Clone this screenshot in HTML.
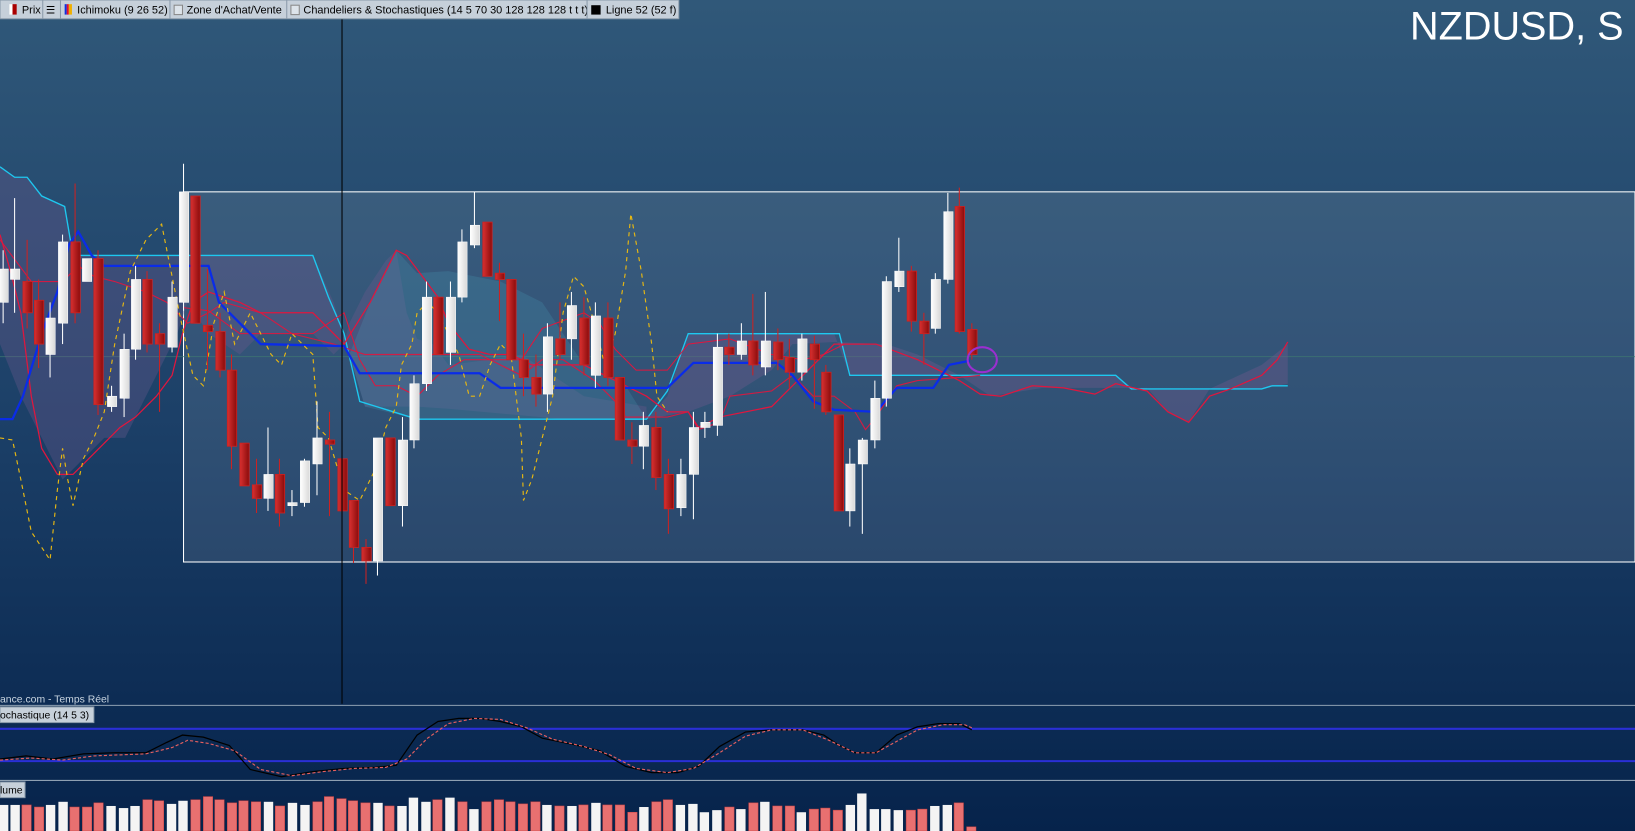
<!DOCTYPE html>
<html><head><meta charset="utf-8"><style>
html,body{margin:0;padding:0;width:1635px;height:831px;overflow:hidden;background:#0a2a50}
svg{display:block}
.w{fill:url(#gw);stroke:#fff;stroke-width:.5}
.r{fill:url(#gr);stroke:#c22;stroke-width:.8}
.wk{stroke:#fff;stroke-width:1}
.rk{stroke:#c22;stroke-width:1}
.vw{fill:#f4f4f4}
.vr{fill:#e87070;stroke:#c44;stroke-width:.5}
text{font-family:"Liberation Sans",sans-serif}
</style></head><body>
<svg width="1635" height="831" viewBox="0 0 1568 797" preserveAspectRatio="none">
<defs>
<linearGradient id="bg" x1="0" y1="0" x2="0" y2="1"><stop offset="0" stop-color="#305879"/><stop offset="0.5" stop-color="#1c4068"/><stop offset="1" stop-color="#06234b"/></linearGradient>
<linearGradient id="gw" x1="0" x2="1"><stop offset="0" stop-color="#fff"/><stop offset="1" stop-color="#d8d8d8"/></linearGradient>
<linearGradient id="gr" x1="0" x2="1"><stop offset="0" stop-color="#d83030"/><stop offset="1" stop-color="#8a0c0c"/></linearGradient>
</defs>
<rect width="1568" height="797" fill="url(#bg)"/>
<rect x="176" y="184" width="1392" height="355" fill="rgba(255,255,255,0.09)" stroke="#fff" stroke-width="1"/>
<line x1="0" y1="342" x2="1568" y2="342" stroke="#3f7a70" stroke-width="1" opacity=".7"/>
<!-- clouds -->
<polygon points="0,160 14,170 26,170 40,188 62,198 70,245 90,245 120,245 300,245 320,290 335,340 350,390 400,390 430,392 540,402 620,402 620,390 560,380 500,340 470,345 430,350 415,330 400,325 390,300 380,240 370,250 350,280 335,310 330,330 320,340 300,320 250,320 230,340 200,320 180,290 170,320 150,360 120,420 100,420 80,440 60,460 40,420 20,380 0,330" fill="rgba(110,90,140,.35)"/>
<polygon points="620,402 640,380 660,320 700,320 800,320 815,360 1070,360 1085,373 1210,373 1235,368 1235,330 1210,350 1160,373 1140,405 1120,395 1100,372 1080,372 1050,372 1000,372 950,380 920,360 880,340 850,330 800,328 760,330 740,355 700,380 660,395" fill="rgba(110,90,140,.4)"/>
<polygon points="335,340 350,390 400,402 540,402 620,402 600,370 560,350 520,290 480,270 430,260 400,262 380,240 355,290" fill="rgba(70,150,180,.25)"/>
<!-- senkou cyan -->
<polyline points="0,160 14,170 26,170 40,188 62,198 70,245 90,245 300,245 315,285 330,320 345,385 400,402 620,402 640,375 660,320 805,320 815,360 1070,360 1085,373 1210,373 1220,370 1235,370" fill="none" stroke="#1ec8f0" stroke-width="1.3"/>
<!-- senkou red -->
<polyline points="0,225 10,260 20,300 30,380 40,430 55,455 70,455 85,440 105,420 115,410 130,400 150,380 165,360 175,320 185,290 200,280 230,290 250,300 300,300 330,330 355,290 380,240 390,245 420,285 430,310 450,335 470,340 490,340 510,350 560,350 580,360 600,370 620,380 640,395 660,395 670,410 690,400 740,390 760,370 780,350 800,330 840,330 880,345 920,365 940,378 960,380 990,370 1020,372 1050,378 1070,368 1100,375 1120,395 1140,405 1160,380 1180,373 1210,360 1225,345 1235,328" fill="none" stroke="#e0163e" stroke-width="1.2"/>
<!-- tenkan -->
<polyline points="0,230 30,270 60,270 75,255 90,265 110,270 140,280 160,290 180,310 200,300 215,290 250,300 280,320 320,330 350,340 400,340 460,340 470,345 500,360 520,345 540,345 570,365 590,385 600,400 640,400 660,395 670,412 690,405 700,380 740,375 760,360 780,380 800,380 820,395 830,412 840,400 860,370 880,365 920,362 940,360" fill="none" stroke="#e0163e" stroke-width="1.1" opacity=".9"/>
<polyline points="176,295 200,298 230,320 300,320 330,300 345,345 360,370 380,370 400,380 420,360 445,345 500,345 520,315 560,300 575,310 590,335 610,355 640,355 660,330 700,325 740,340 770,345 790,340 810,330" fill="none" stroke="#e0163e" stroke-width="1"/>
<!-- kijun blue -->
<polyline points="0,402 12,402 22,380 40,320 55,280 66,235 75,222 88,245 100,255 200,255 210,290 230,310 250,330 330,332 345,358 400,358 460,358 480,372 600,372 620,372 640,372 665,348 745,348 760,360 780,385 800,393 840,395 860,372 895,372 910,350 930,346" fill="none" stroke="#0a2ce8" stroke-width="2.2"/>
<!-- chikou dashed -->
<polyline points="0,420 12,422 20,460 30,510 40,525 48,537 55,470 60,430 65,460 70,485 80,440 90,420 100,395 110,330 125,260 140,230 155,215 160,240 172,300 185,360 195,370 205,310 215,280 225,330 240,300 260,340 270,350 280,320 290,330 300,340 305,410 315,420 330,470 345,480 360,450 370,410 380,390 385,350 395,330 400,300 410,290 420,300 430,320 440,340 450,380 460,380 470,350 480,330 490,340 500,420 502,480 510,460 520,420 530,380 540,300 550,265 560,275 570,310 580,350 590,320 600,260 605,205 615,260 625,330 630,380 640,395" fill="none" stroke="#e8b812" stroke-width="1.1" stroke-dasharray="4,4"/>
<!-- candles -->
<g>
<line class="wk" x1="3" y1="240" x2="3" y2="310"/><rect class="w" x="-1" y="258" width="9" height="32"/>
<line class="wk" x1="14" y1="190" x2="14" y2="300"/><rect class="w" x="10" y="258" width="9" height="10"/>
<line class="rk" x1="26" y1="230" x2="26" y2="315"/><rect class="r" x="22" y="270" width="9" height="30"/>
<line class="rk" x1="37" y1="268" x2="37" y2="353"/><rect class="r" x="33" y="288" width="9" height="42"/>
<line class="wk" x1="48" y1="290" x2="48" y2="362"/><rect class="w" x="44" y="305" width="9" height="35"/>
<line class="wk" x1="60" y1="225" x2="60" y2="330"/><rect class="w" x="56" y="232" width="9" height="78"/>
<line class="rk" x1="72" y1="176" x2="72" y2="310"/><rect class="r" x="68" y="232" width="9" height="68"/>
<rect class="w" x="79" y="248" width="9" height="22"/>
<line class="rk" x1="94" y1="240" x2="94" y2="398"/><rect class="r" x="90" y="248" width="9" height="140"/>
<line class="wk" x1="107" y1="370" x2="107" y2="395"/><rect class="w" x="103" y="380" width="9" height="10"/>
<line class="wk" x1="119" y1="320" x2="119" y2="400"/><rect class="w" x="115" y="335" width="9" height="47"/>
<line class="wk" x1="130" y1="255" x2="130" y2="345"/><rect class="w" x="126" y="268" width="9" height="67"/>
<line class="rk" x1="141" y1="260" x2="141" y2="338"/><rect class="r" x="137" y="268" width="9" height="62"/>
<line class="rk" x1="153" y1="310" x2="153" y2="395"/><rect class="r" x="149" y="320" width="9" height="10"/>
<line class="wk" x1="165" y1="270" x2="165" y2="338"/><rect class="w" x="161" y="285" width="9" height="48"/>
<line class="wk" x1="176" y1="157" x2="176" y2="298"/><rect class="w" x="172" y="184" width="9" height="106"/>
<rect class="r" x="183" y="188" width="9" height="122"/>
<line class="rk" x1="199" y1="258" x2="199" y2="355"/><rect class="r" x="195" y="312" width="9" height="6"/>
<line class="rk" x1="211" y1="300" x2="211" y2="362"/><rect class="r" x="207" y="318" width="9" height="37"/>
<line class="rk" x1="222" y1="340" x2="222" y2="450"/><rect class="r" x="218" y="355" width="9" height="73"/>
<rect class="r" x="230" y="425" width="9" height="41"/>
<line class="rk" x1="246" y1="440" x2="246" y2="492"/><rect class="r" x="242" y="465" width="9" height="13"/>
<line class="wk" x1="257" y1="410" x2="257" y2="490"/><rect class="w" x="253" y="455" width="9" height="23"/>
<line class="rk" x1="268" y1="440" x2="268" y2="505"/><rect class="r" x="264" y="455" width="9" height="37"/>
<line class="wk" x1="280" y1="470" x2="280" y2="495"/><rect class="w" x="276" y="482" width="9" height="3"/>
<line class="wk" x1="292" y1="440" x2="292" y2="486"/><rect class="w" x="288" y="442" width="9" height="40"/>
<line class="wk" x1="304" y1="385" x2="304" y2="475"/><rect class="w" x="300" y="420" width="9" height="25"/>
<line class="rk" x1="316" y1="395" x2="316" y2="495"/><rect class="r" x="312" y="422" width="9" height="4"/>
<rect class="r" x="324" y="440" width="9" height="50"/>
<line class="rk" x1="339" y1="480" x2="339" y2="540"/><rect class="r" x="335" y="480" width="9" height="45"/>
<line class="rk" x1="351" y1="517" x2="351" y2="560"/><rect class="r" x="347" y="525" width="9" height="13"/>
<line class="wk" x1="362" y1="435" x2="362" y2="552"/><rect class="w" x="358" y="420" width="9" height="118"/>
<rect class="r" x="370" y="420" width="9" height="65"/>
<line class="wk" x1="386" y1="400" x2="386" y2="505"/><rect class="w" x="382" y="422" width="9" height="63"/>
<line class="wk" x1="397" y1="360" x2="397" y2="430"/><rect class="w" x="393" y="368" width="9" height="54"/>
<line class="wk" x1="409" y1="270" x2="409" y2="375"/><rect class="w" x="405" y="285" width="9" height="83"/>
<rect class="r" x="416" y="285" width="9" height="55"/>
<line class="wk" x1="432" y1="270" x2="432" y2="350"/><rect class="w" x="428" y="285" width="9" height="53"/>
<line class="wk" x1="443" y1="220" x2="443" y2="290"/><rect class="w" x="439" y="232" width="9" height="53"/>
<line class="wk" x1="455" y1="184" x2="455" y2="238"/><rect class="w" x="451" y="216" width="9" height="19"/>
<rect class="r" x="463" y="213" width="9" height="52"/>
<line class="rk" x1="479" y1="252" x2="479" y2="308"/><rect class="r" x="475" y="262" width="9" height="6"/>
<rect class="r" x="486" y="268" width="9" height="77"/>
<line class="rk" x1="502" y1="320" x2="502" y2="380"/><rect class="r" x="498" y="345" width="9" height="17"/>
<line class="rk" x1="514" y1="340" x2="514" y2="390"/><rect class="r" x="510" y="362" width="9" height="16"/>
<line class="wk" x1="525" y1="310" x2="525" y2="395"/><rect class="w" x="521" y="323" width="9" height="55"/>
<line class="rk" x1="537" y1="290" x2="537" y2="345"/><rect class="r" x="533" y="325" width="9" height="15"/>
<line class="wk" x1="548" y1="280" x2="548" y2="345"/><rect class="w" x="544" y="293" width="9" height="32"/>
<line class="rk" x1="560" y1="285" x2="560" y2="360"/><rect class="r" x="556" y="305" width="9" height="45"/>
<line class="wk" x1="571" y1="290" x2="571" y2="372"/><rect class="w" x="567" y="303" width="9" height="57"/>
<line class="rk" x1="583" y1="290" x2="583" y2="370"/><rect class="r" x="579" y="305" width="9" height="57"/>
<rect class="r" x="590" y="362" width="9" height="60"/>
<line class="rk" x1="606" y1="405" x2="606" y2="445"/><rect class="r" x="602" y="422" width="9" height="6"/>
<line class="wk" x1="617" y1="395" x2="617" y2="450"/><rect class="w" x="613" y="408" width="9" height="20"/>
<line class="rk" x1="629" y1="395" x2="629" y2="470"/><rect class="r" x="625" y="410" width="9" height="48"/>
<line class="rk" x1="641" y1="440" x2="641" y2="512"/><rect class="r" x="637" y="455" width="9" height="33"/>
<line class="wk" x1="653" y1="440" x2="653" y2="495"/><rect class="w" x="649" y="455" width="9" height="32"/>
<line class="wk" x1="665" y1="395" x2="665" y2="498"/><rect class="w" x="661" y="410" width="9" height="45"/>
<line class="wk" x1="676" y1="395" x2="676" y2="420"/><rect class="w" x="672" y="405" width="9" height="5"/>
<line class="wk" x1="688" y1="320" x2="688" y2="418"/><rect class="w" x="684" y="333" width="9" height="75"/>
<line class="rk" x1="699" y1="320" x2="699" y2="350"/><rect class="r" x="695" y="333" width="9" height="7"/>
<line class="wk" x1="711" y1="310" x2="711" y2="345"/><rect class="w" x="707" y="327" width="9" height="13"/>
<line class="rk" x1="722" y1="282" x2="722" y2="360"/><rect class="r" x="718" y="327" width="9" height="23"/>
<line class="wk" x1="734" y1="280" x2="734" y2="360"/><rect class="w" x="730" y="327" width="9" height="25"/>
<line class="rk" x1="746" y1="315" x2="746" y2="355"/><rect class="r" x="742" y="328" width="9" height="17"/>
<line class="rk" x1="757" y1="325" x2="757" y2="372"/><rect class="r" x="753" y="343" width="9" height="14"/>
<line class="wk" x1="769" y1="320" x2="769" y2="365"/><rect class="w" x="765" y="325" width="9" height="32"/>
<line class="rk" x1="781" y1="322" x2="781" y2="392"/><rect class="r" x="777" y="330" width="9" height="15"/>
<line class="rk" x1="792" y1="350" x2="792" y2="398"/><rect class="r" x="788" y="357" width="9" height="38"/>
<rect class="r" x="800" y="398" width="9" height="92"/>
<line class="wk" x1="815" y1="430" x2="815" y2="505"/><rect class="w" x="811" y="445" width="9" height="45"/>
<line class="wk" x1="827" y1="420" x2="827" y2="512"/><rect class="w" x="823" y="422" width="9" height="23"/>
<line class="wk" x1="839" y1="365" x2="839" y2="430"/><rect class="w" x="835" y="382" width="9" height="40"/>
<line class="wk" x1="850" y1="265" x2="850" y2="390"/><rect class="w" x="846" y="270" width="9" height="112"/>
<line class="wk" x1="862" y1="228" x2="862" y2="280"/><rect class="w" x="858" y="260" width="9" height="15"/>
<line class="rk" x1="874" y1="255" x2="874" y2="318"/><rect class="r" x="870" y="260" width="9" height="48"/>
<line class="rk" x1="886" y1="300" x2="886" y2="350"/><rect class="r" x="882" y="308" width="9" height="12"/>
<line class="wk" x1="897" y1="262" x2="897" y2="320"/><rect class="w" x="893" y="268" width="9" height="47"/>
<line class="wk" x1="909" y1="185" x2="909" y2="272"/><rect class="w" x="905" y="203" width="9" height="65"/>
<line class="rk" x1="920" y1="180" x2="920" y2="320"/><rect class="r" x="916" y="198" width="9" height="120"/>
<line class="rk" x1="932" y1="310" x2="932" y2="345"/><rect class="r" x="928" y="316" width="9" height="24"/>
</g>
<ellipse cx="942" cy="345" rx="14" ry="12" fill="none" stroke="#9b2fd0" stroke-width="2"/>
<line x1="328" y1="0" x2="328" y2="675" stroke="#000" stroke-width="1"/>
<!-- legend -->
<rect x="0" y="0" width="651" height="18" fill="#c6d0da" stroke="#8a9aaa"/>
<g font-size="10.5" fill="#000">
<rect x="9" y="4" width="3" height="10" fill="#fff"/><rect x="12" y="4" width="4" height="10" fill="#a00"/>
<text x="21" y="13">Prix</text>
<line x1="41" y1="0" x2="41" y2="18" stroke="#8a9aaa"/>
<text x="44" y="13" font-size="10">☰</text>
<line x1="58" y1="0" x2="58" y2="18" stroke="#8a9aaa"/>
<rect x="62" y="4" width="2" height="10" fill="#1030e0"/><rect x="64" y="4" width="2" height="10" fill="#e01030"/><rect x="66" y="4" width="3" height="10" fill="#f0b000"/>
<text x="74" y="13">Ichimoku (9 26 52)</text>
<line x1="163" y1="0" x2="163" y2="18" stroke="#8a9aaa"/>
<rect x="167" y="5" width="8" height="9" fill="#dde4ea" stroke="#888"/>
<text x="179" y="13">Zone d'Achat/Vente</text>
<line x1="275" y1="0" x2="275" y2="18" stroke="#8a9aaa"/>
<rect x="279" y="5" width="8" height="9" fill="#dde4ea" stroke="#888"/>
<text x="291" y="13">Chandeliers &amp; Stochastiques (14 5 70 30 128 128 128 t t t)</text>
<line x1="563" y1="0" x2="563" y2="18" stroke="#8a9aaa"/>
<rect x="567" y="5" width="9" height="9" fill="#000"/>
<text x="581" y="13">Ligne 52 (52 f)</text>
</g>
<text x="1557" y="38" font-size="38" fill="#fff" text-anchor="end">NZDUSD, S</text>
<text x="0" y="674" font-size="10" fill="#c8d4e0">ance.com - Temps Réel</text>
<line x1="0" y1="676.5" x2="1568" y2="676.5" stroke="#8ea0b2" stroke-width="1"/>
<!-- stochastic -->
<rect x="0" y="678" width="90" height="15" fill="#c6d0da" stroke="#8a9aaa"/>
<text x="0" y="689" font-size="10" fill="#000">ochastique (14 5 3)</text>
<line x1="0" y1="699" x2="1568" y2="699" stroke="#2a2fd6" stroke-width="2"/>
<line x1="0" y1="730" x2="1568" y2="730" stroke="#2a2fd6" stroke-width="2"/>
<polyline points="0,728 25,725 50,728 80,723 110,722 140,722 160,712 175,705 195,707 220,715 240,738 270,745 300,740 330,737 360,736 380,734 400,705 420,692 440,689 460,689 480,692 500,697 520,708 550,714 575,720 600,735 625,741 650,741 670,735 690,716 715,702 740,700 770,700 790,705 805,715 820,722 840,722 860,705 880,697 900,694 920,694 932,700" fill="none" stroke="#000" stroke-width="1.2"/>
<polyline points="0,729 30,727 60,729 90,725 140,723 165,717 180,710 200,713 225,720 250,738 280,744 310,740 340,737 370,736 390,728 410,708 430,694 455,689 480,690 505,698 530,709 560,716 585,724 610,737 640,741 665,737 690,722 715,706 740,700 770,700 795,710 820,722 840,722 860,711 880,700 905,695 925,695 932,698" fill="none" stroke="#e66060" stroke-width="1.1" stroke-dasharray="3,2"/>
<line x1="0" y1="748.5" x2="1568" y2="748.5" stroke="#8ea0b2" stroke-width="1"/>
<rect x="0" y="750" width="24" height="15" fill="#c6d0da" stroke="#8a9aaa"/>
<text x="0" y="761" font-size="10" fill="#000">lume</text>
<!-- volume -->
<g>
<rect class="vw" x="-1" y="772" width="9" height="25"/><rect class="vw" x="10" y="772" width="9" height="25"/>
<rect class="vr" x="21" y="772" width="9" height="25"/><rect class="vr" x="33" y="774" width="9" height="23"/>
<rect class="vw" x="44" y="772" width="9" height="25"/><rect class="vw" x="56" y="769" width="9" height="28"/>
<rect class="vr" x="67" y="774" width="9" height="23"/><rect class="vr" x="79" y="774" width="9" height="23"/>
<rect class="vr" x="90" y="770" width="9" height="27"/><rect class="vw" x="102" y="773" width="9" height="24"/>
<rect class="vw" x="114" y="775" width="9" height="22"/><rect class="vw" x="125" y="773" width="9" height="24"/>
<rect class="vr" x="137" y="767" width="9" height="30"/><rect class="vr" x="148" y="768" width="9" height="29"/>
<rect class="vw" x="160" y="771" width="9" height="26"/><rect class="vw" x="171" y="768" width="9" height="29"/>
<rect class="vr" x="183" y="767" width="9" height="30"/><rect class="vr" x="195" y="764" width="9" height="33"/>
<rect class="vr" x="206" y="767" width="9" height="30"/><rect class="vr" x="218" y="770" width="9" height="27"/>
<rect class="vr" x="229" y="768" width="9" height="29"/><rect class="vr" x="241" y="769" width="9" height="28"/>
<rect class="vw" x="253" y="769" width="9" height="28"/><rect class="vr" x="264" y="773" width="9" height="24"/>
<rect class="vw" x="276" y="770" width="9" height="27"/><rect class="vw" x="288" y="772" width="9" height="25"/>
<rect class="vr" x="300" y="769" width="9" height="28"/><rect class="vr" x="311" y="764" width="9" height="33"/>
<rect class="vr" x="323" y="766" width="9" height="31"/><rect class="vr" x="334" y="768" width="9" height="29"/>
<rect class="vr" x="346" y="770" width="9" height="27"/><rect class="vw" x="358" y="770" width="9" height="27"/>
<rect class="vr" x="369" y="773" width="9" height="24"/><rect class="vw" x="381" y="773" width="9" height="24"/>
<rect class="vw" x="392" y="765" width="9" height="32"/><rect class="vw" x="404" y="769" width="9" height="28"/>
<rect class="vr" x="415" y="767" width="9" height="30"/><rect class="vw" x="427" y="765" width="9" height="32"/>
<rect class="vr" x="439" y="769" width="9" height="28"/><rect class="vw" x="450" y="776" width="9" height="21"/>
<rect class="vr" x="462" y="769" width="9" height="28"/><rect class="vr" x="474" y="767" width="9" height="30"/>
<rect class="vr" x="485" y="769" width="9" height="28"/><rect class="vr" x="497" y="771" width="9" height="26"/>
<rect class="vr" x="509" y="769" width="9" height="28"/><rect class="vw" x="520" y="772" width="9" height="25"/>
<rect class="vr" x="532" y="773" width="9" height="24"/><rect class="vw" x="544" y="773" width="9" height="24"/>
<rect class="vr" x="555" y="772" width="9" height="25"/><rect class="vw" x="567" y="770" width="9" height="27"/>
<rect class="vr" x="578" y="772" width="9" height="25"/><rect class="vr" x="590" y="772" width="9" height="25"/>
<rect class="vr" x="602" y="779" width="9" height="18"/><rect class="vw" x="613" y="774" width="9" height="23"/>
<rect class="vr" x="625" y="769" width="9" height="28"/><rect class="vr" x="636" y="767" width="9" height="30"/>
<rect class="vw" x="648" y="772" width="9" height="25"/><rect class="vw" x="660" y="771" width="9" height="26"/>
<rect class="vw" x="671" y="779" width="9" height="18"/><rect class="vw" x="683" y="777" width="9" height="20"/>
<rect class="vr" x="695" y="774" width="9" height="23"/><rect class="vw" x="706" y="776" width="9" height="21"/>
<rect class="vr" x="718" y="770" width="9" height="27"/><rect class="vw" x="729" y="769" width="9" height="28"/>
<rect class="vr" x="741" y="773" width="9" height="24"/><rect class="vr" x="753" y="773" width="9" height="24"/>
<rect class="vw" x="764" y="779" width="9" height="18"/><rect class="vr" x="776" y="776" width="9" height="21"/>
<rect class="vr" x="787" y="775" width="9" height="22"/><rect class="vr" x="799" y="777" width="9" height="20"/>
<rect class="vw" x="811" y="772" width="9" height="25"/><rect class="vw" x="822" y="761" width="9" height="36"/>
<rect class="vw" x="834" y="776" width="9" height="21"/><rect class="vw" x="845" y="776" width="9" height="21"/>
<rect class="vw" x="857" y="777" width="9" height="20"/><rect class="vr" x="869" y="777" width="9" height="20"/>
<rect class="vr" x="880" y="776" width="9" height="21"/><rect class="vw" x="892" y="773" width="9" height="24"/>
<rect class="vw" x="904" y="772" width="9" height="25"/><rect class="vr" x="915" y="770" width="9" height="27"/>
<rect class="vr" x="927" y="793" width="9" height="4"/>
</g>
</svg>
</body></html>
